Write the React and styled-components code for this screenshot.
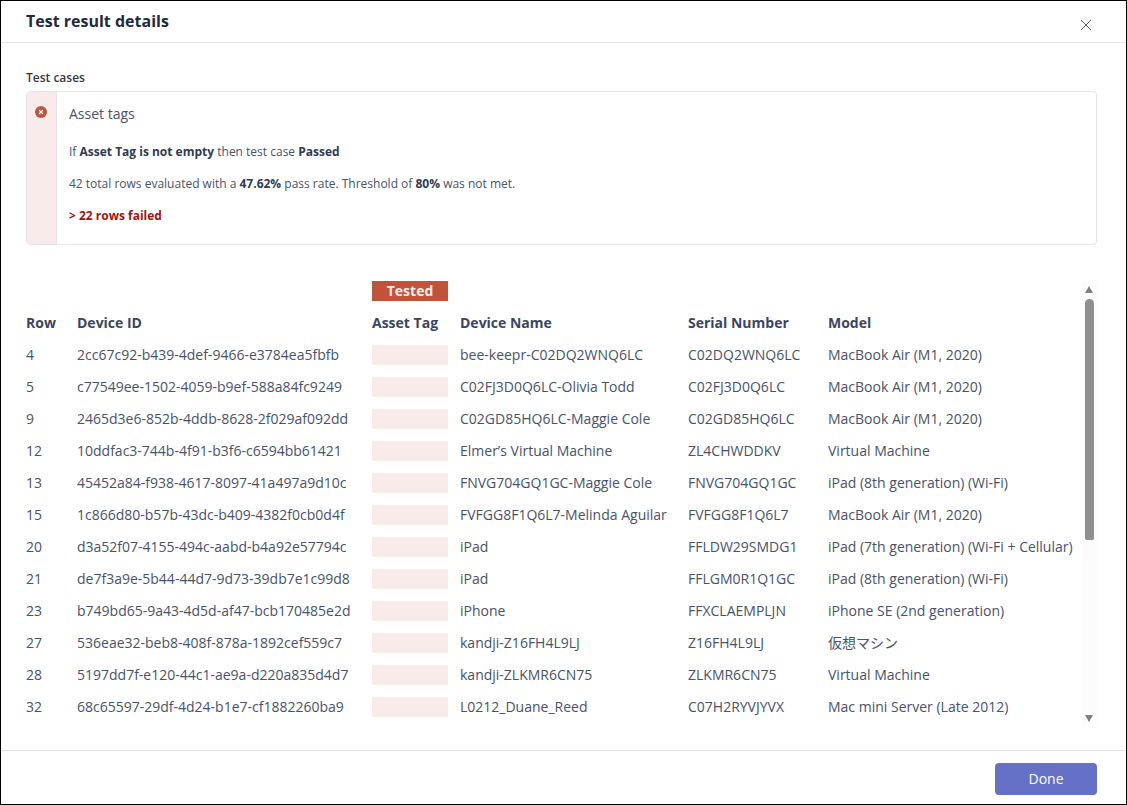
import React from 'react';
import styled, { createGlobalStyle } from 'styled-components';

const Global = createGlobalStyle`
  html, body { margin: 0; padding: 0; background: #fff; }
  * { box-sizing: border-box; }
  body { font-family: "Open Sans", "Noto Sans CJK JP", sans-serif; color: #2f3b55; }
`;

const Modal = styled.div`
  width: 1127px; height: 805px; border: 1px solid #000;
  display: flex; flex-direction: column; background: #fff; overflow: hidden;
`;
const Header = styled.header`
  height: 42px; flex: none; border-bottom: 1px solid #e3e3ef;
  display: flex; align-items: flex-start; justify-content: space-between;
  padding: 9px 34px 0 25px;
`;
const Title = styled.h1`
  margin: 0; font-size: 16px; line-height: 22px; font-weight: 700; color: #252a3a;
`;
const Close = styled.button`
  border: 0; background: none; padding: 0; margin-top: 9px; width: 12px; height: 12px; display: flex; cursor: pointer;
`;
const Body = styled.main`
  flex: 1; min-height: 0; padding: 26px 29px 0 25px; display: flex; flex-direction: column;
`;
const SectionLabel = styled.div`
  font-size: 12px; line-height: 17px; font-weight: 600; color: #33374a; margin-bottom: 5px;
`;
const Card = styled.section`
  height: 154px; flex: none; border: 1px solid #e3e3ef; border-radius: 4px; display: flex; overflow: hidden;
`;
const Rail = styled.div`
  width: 30px; flex: none; background: #f8ebe9; border-right: 1px solid #e3e3ef; padding: 14px 0 0 8px;
  svg { display: block; }
`;
const CardBody = styled.div`
  padding: 12px 12px 0; display: flex; flex-direction: column;
`;
const CaseTitle = styled.div`
  font-size: 14px; line-height: 20px; color: #47526b; margin-bottom: 20px;
`;
const Line = styled.p`
  margin: 0 0 16px; font-size: 12px; line-height: 16px; color: #47526b;
  b { font-weight: 700; color: #2f3b55; }
`;
const Failed = styled(Line)`
  font-weight: 700; color: #a4130f;
`;
const TableArea = styled.div`
  margin-top: 36px; flex: 1; min-height: 0; display: flex; justify-content: space-between;
`;
const Grid = styled.div`
  display: grid; grid-template-columns: 51px 295px 76px 12px 216px 12px 128px 12px 1fr;
  grid-template-rows: 26px; grid-auto-rows: 32px; flex: 1; align-content: start;
`;
const Tested = styled.div`
  grid-column: 3; height: 20px; background: #c0533a; color: #fbeee9; font-size: 14px; font-weight: 700;
  line-height: 20px; text-align: center; align-self: start;
`;
const Head = styled.div`
  font-size: 14px; font-weight: 700; line-height: 32px; color: #3a4661; white-space: nowrap;
`;
const Cell = styled.div`
  font-size: 14px; line-height: 32px; color: #47526b; white-space: nowrap;
`;
const EmptyTag = styled.div`
  height: 20px; margin-top: 6px; background: #f8ebe9;
`;
const Gap = styled.div``;
const Scrollbar = styled.div`
  width: 15px; height: 444px; flex: none; background: #fcfcfc; display: flex; flex-direction: column;
  padding: 5px 3px 3px;
`;
const Thumb = styled.div`
  width: 9px; height: 241px; border-radius: 5px 5px 2px 2px; background: #8f8f8f; margin-top: 6px;
`;
const Arrow = styled.div`
  width: 0; height: 0; border-left: 4.5px solid transparent; border-right: 4.5px solid transparent;
  ${p => (p.$down ? 'border-top: 7px solid #7f7f7f; margin-top: auto;' : 'border-bottom: 7px solid #7f7f7f;')}
`;
const Footer = styled.footer`
  height: 54px; flex: none; border-top: 1px solid #e3e3ef; display: flex; justify-content: flex-end;
  padding: 12px 29px 0 0;
`;
const Done = styled.button`
  width: 102px; height: 32px; border: 0; border-radius: 4px; background: #6570c7; color: #fff;
  padding: 0 0 2px; font: 400 14px "Open Sans", sans-serif; cursor: pointer;
`;

const rows = [
  ['4', '2cc67c92-b439-4def-9466-e3784ea5fbfb', 'bee-keepr-C02DQ2WNQ6LC', 'C02DQ2WNQ6LC', 'MacBook Air (M1, 2020)'],
  ['5', 'c77549ee-1502-4059-b9ef-588a84fc9249', 'C02FJ3D0Q6LC-Olivia Todd', 'C02FJ3D0Q6LC', 'MacBook Air (M1, 2020)'],
  ['9', '2465d3e6-852b-4ddb-8628-2f029af092dd', 'C02GD85HQ6LC-Maggie Cole', 'C02GD85HQ6LC', 'MacBook Air (M1, 2020)'],
  ['12', '10ddfac3-744b-4f91-b3f6-c6594bb61421', 'Elmer’s Virtual Machine', 'ZL4CHWDDKV', 'Virtual Machine'],
  ['13', '45452a84-f938-4617-8097-41a497a9d10c', 'FNVG704GQ1GC-Maggie Cole', 'FNVG704GQ1GC', 'iPad (8th generation) (Wi-Fi)'],
  ['15', '1c866d80-b57b-43dc-b409-4382f0cb0d4f', 'FVFGG8F1Q6L7-Melinda Aguilar', 'FVFGG8F1Q6L7', 'MacBook Air (M1, 2020)'],
  ['20', 'd3a52f07-4155-494c-aabd-b4a92e57794c', 'iPad', 'FFLDW29SMDG1', 'iPad (7th generation) (Wi-Fi + Cellular)'],
  ['21', 'de7f3a9e-5b44-44d7-9d73-39db7e1c99d8', 'iPad', 'FFLGM0R1Q1GC', 'iPad (8th generation) (Wi-Fi)'],
  ['23', 'b749bd65-9a43-4d5d-af47-bcb170485e2d', 'iPhone', 'FFXCLAEMPLJN', 'iPhone SE (2nd generation)'],
  ['27', '536eae32-beb8-408f-878a-1892cef559c7', 'kandji-Z16FH4L9LJ', 'Z16FH4L9LJ', '仮想マシン'],
  ['28', '5197dd7f-e120-44c1-ae9a-d220a835d4d7', 'kandji-ZLKMR6CN75', 'ZLKMR6CN75', 'Virtual Machine'],
  ['32', '68c65597-29df-4d24-b1e7-cf1882260ba9', 'L0212_Duane_Reed', 'C07H2RYVJYVX', 'Mac mini Server (Late 2012)'],
];

export default function App() {
  return (
    <>
      <Global />
      <Modal>
        <Header>
          <Title>Test result details</Title>
          <Close aria-label="Close">
            <svg width="12" height="12" viewBox="0 0 12 12" fill="none" stroke="#555" strokeWidth="1"><path d="M1 1l10 10M11 1L1 11" /></svg>
          </Close>
        </Header>
        <Body>
          <SectionLabel>Test cases</SectionLabel>
          <Card>
            <Rail>
              <svg width="12" height="12" viewBox="0 0 12 12"><circle cx="6" cy="6" r="6" fill="#c0533a" /><path d="M4 4l4 4M8 4L4 8" stroke="#fff" strokeWidth="1.2" /></svg>
            </Rail>
            <CardBody>
              <CaseTitle>Asset tags</CaseTitle>
              <Line>If <b>Asset Tag is not empty</b> then test case <b>Passed</b></Line>
              <Line>42 total rows evaluated with a <b>47.62%</b> pass rate. Threshold of <b>80%</b> was not met.</Line>
              <Failed>&gt; 22 rows failed</Failed>
            </CardBody>
          </Card>
          <TableArea>
            <Grid>
              <Gap /><Gap /><Tested>Tested</Tested><Gap /><Gap /><Gap /><Gap /><Gap /><Gap />
              <Head>Row</Head><Head>Device ID</Head><Head>Asset Tag</Head><Gap /><Head>Device Name</Head><Gap /><Head>Serial Number</Head><Gap /><Head>Model</Head>
              {rows.map(r => (
                <React.Fragment key={r[0]}>
                  <Cell>{r[0]}</Cell><Cell>{r[1]}</Cell><EmptyTag /><Gap /><Cell>{r[2]}</Cell><Gap /><Cell>{r[3]}</Cell><Gap /><Cell>{r[4]}</Cell>
                </React.Fragment>
              ))}
            </Grid>
            <Scrollbar>
              <Arrow />
              <Thumb />
              <Arrow $down />
            </Scrollbar>
          </TableArea>
        </Body>
        <Footer><Done>Done</Done></Footer>
      </Modal>
    </>
  );
}
